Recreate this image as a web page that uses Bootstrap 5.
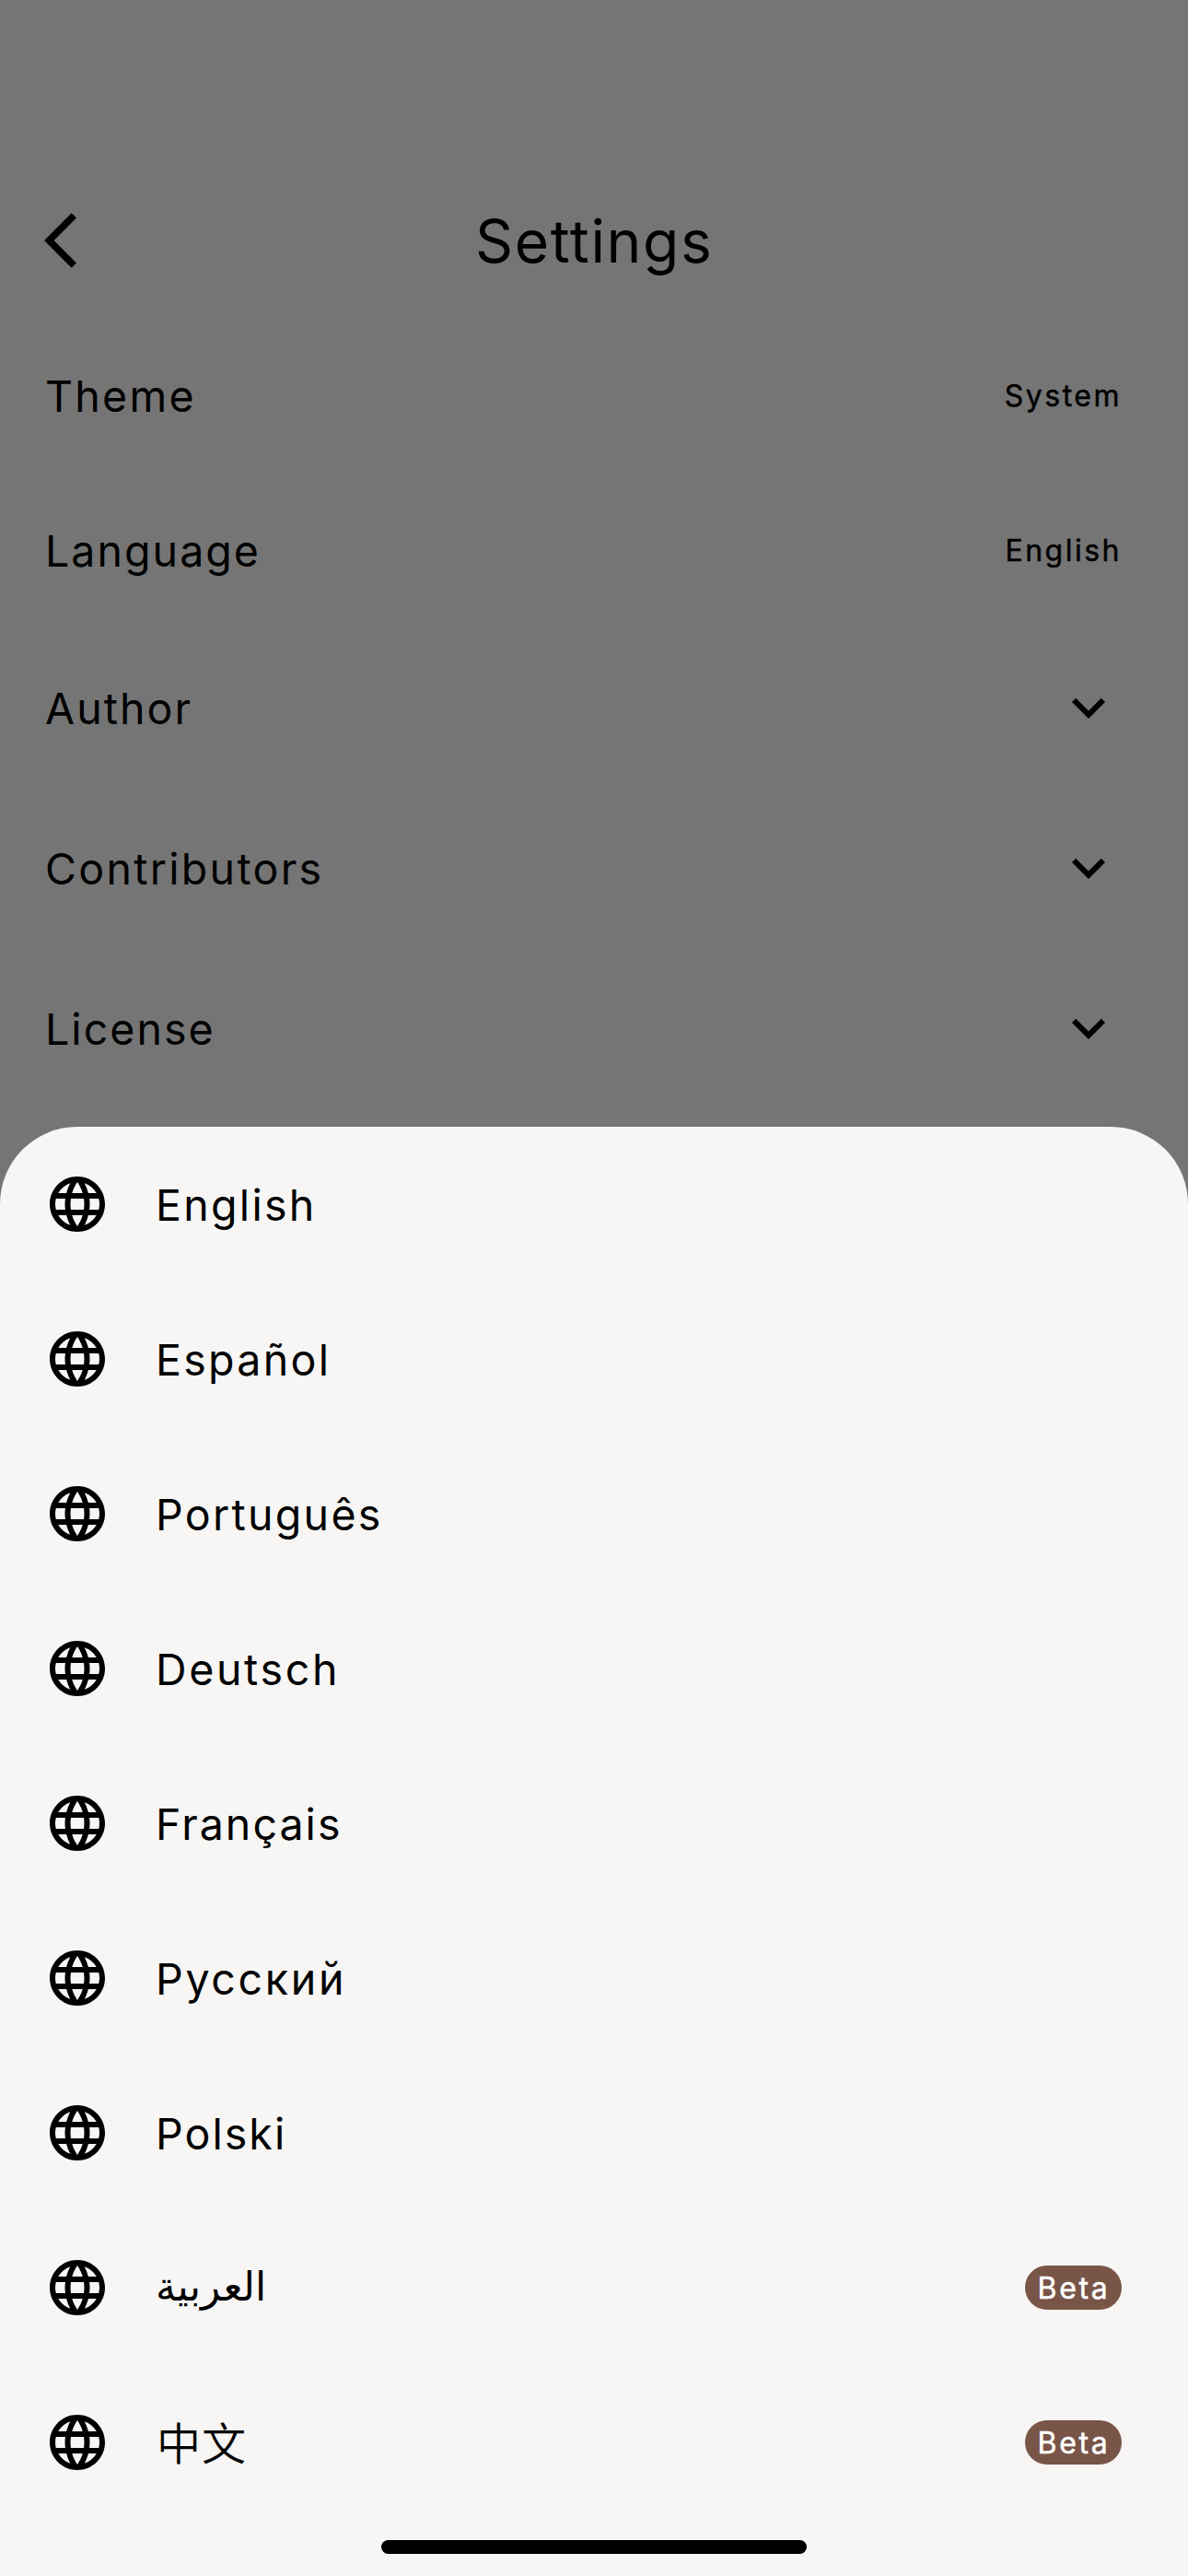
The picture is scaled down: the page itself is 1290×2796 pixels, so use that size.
<!DOCTYPE html>
<html lang="en">
<head>
<meta charset="utf-8">
<meta name="viewport" content="width=device-width, initial-scale=1">
<title>Settings</title>
<link rel="stylesheet" href="https://cdn.jsdelivr.net/npm/bootstrap@5.3.0/dist/css/bootstrap.min.css">
<style>
  body { background: #757575; color: #000; font-family: Inter, "Noto Sans CJK SC", sans-serif; font-size: 46.5px; line-height: 56px; height: 2796px; overflow: hidden; }
  .icon { width: 72px; height: 72px; fill: currentColor; display: block; flex: none; }
  .status-space { height: 177px; }
  .app-bar { height: 168px; padding: 0 48px; }
  .app-title { font-size: 64px; line-height: 78px; font-weight: 400; letter-spacing: 1.68px; margin: 2px 0 0; }
  .side { width: 468px; }
  .setting { height: 168px; padding: 0 72px 0 49px; }
  .setting.expandable { height: 174px; }
  .setting-name, .lang-name { letter-spacing: 2.3px; padding-top: 2px; white-space: nowrap; }
  .setting-name.snug { letter-spacing: 2.05px; }
  .setting-value { font-size: 32px; line-height: 40px; letter-spacing: 2.5px; padding-top: 2px; -webkit-text-stroke: .5px currentColor; }
  .sheet { height: 1573px; background: #f7f6f4; border-radius: 84px 84px 0 0; }
  .settings-list { height: 878px; overflow: hidden; }
  .lang-row { height: 168px; padding: 0 72px 0 48px; gap: 49px; }
  .lang-name:lang(de) { letter-spacing: 2.65px; }
  .lang-name:lang(ru) { letter-spacing: 2.7px; }
  .lang-name:lang(fr), .lang-name:lang(pl) { letter-spacing: 2.05px; }
  .lang-name.arabic { font: 44px/56px "DejaVu Sans", sans-serif; letter-spacing: 0; padding: 0 0 3px; }
  .lang-name.chinese { font-family: "Noto Sans CJK SC", sans-serif; font-weight: 350; font-size: 48px; letter-spacing: 1px; padding: 0 0 5px 1px; }
  .beta { width: 105px; height: 48px; background: #795548; color: #fff; font-size: 32px; line-height: 40px; letter-spacing: 2.7px; padding: 2px 0 0 1px; -webkit-text-stroke: .5px currentColor; }
  .home-bar { width: 462px; height: 15px; background: #000; margin-top: 22px; }
</style>
<script src="https://cdn.jsdelivr.net/npm/bootstrap@5.3.0/dist/js/bootstrap.bundle.min.js"></script>
</head>
<body>
<svg class="d-none">
  <symbol id="globe" viewBox="0 0 24 24"><path d="M11.99 2C6.47 2 2 6.48 2 12s4.47 10 9.99 10C17.52 22 22 17.52 22 12S17.52 2 11.99 2zm6.93 6h-2.95c-.32-1.25-.78-2.45-1.38-3.56 1.84.63 3.37 1.91 4.33 3.56zM12 4.04c.83 1.2 1.48 2.53 1.91 3.96h-3.82c.43-1.43 1.08-2.76 1.91-3.96zM4.26 14C4.1 13.36 4 12.69 4 12s.1-1.36.26-2h3.38c-.08.66-.14 1.32-.14 2s.06 1.34.14 2H4.26zm.82 2h2.95c.32 1.25.78 2.45 1.38 3.56-1.84-.63-3.37-1.9-4.33-3.56zm2.95-8H5.08c.96-1.66 2.49-2.93 4.33-3.56C8.81 5.55 8.35 6.75 8.03 8zM12 19.96c-.83-1.2-1.48-2.53-1.91-3.96h3.82c-.43 1.43-1.08 2.76-1.91 3.96zM14.34 14H9.66c-.09-.66-.16-1.32-.16-2s.07-1.35.16-2h4.68c.09.65.16 1.32.16 2s-.07 1.34-.16 2zm.25 5.56c.6-1.11 1.06-2.31 1.38-3.56h2.95c-.96 1.65-2.49 2.93-4.33 3.56zM16.36 14c.08-.66.14-1.32.14-2s-.06-1.34-.14-2h3.38c.16.64.26 1.31.26 2s-.1 1.36-.26 2h-3.38z"/></symbol>
  <symbol id="chevron" viewBox="0 0 24 24"><path d="M16.59 8.59L12 13.17 7.41 8.59 6 10l6 6 6-6z"/></symbol>
  <symbol id="back" viewBox="0 0 24 24"><path d="M11.67 3.87L9.9 2.1 0 12l9.9 9.9 1.77-1.77L3.54 12z"/></symbol>
</svg>

<div class="status-space"></div>
<header class="app-bar d-flex align-items-center">
  <div class="side"><svg class="icon"><use href="#back"/></svg></div>
  <h1 class="app-title">Settings</h1>
</header>

<main class="settings-list">
  <div class="setting d-flex align-items-center justify-content-between"><span class="setting-name">Theme</span><span class="setting-value">System</span></div>
  <div class="setting d-flex align-items-center justify-content-between"><span class="setting-name snug">Language</span><span class="setting-value">English</span></div>
  <div class="setting expandable d-flex align-items-center justify-content-between"><span class="setting-name snug">Author</span><svg class="icon"><use href="#chevron"/></svg></div>
  <div class="setting expandable d-flex align-items-center justify-content-between"><span class="setting-name">Contributors</span><svg class="icon"><use href="#chevron"/></svg></div>
  <div class="setting expandable d-flex align-items-center justify-content-between"><span class="setting-name snug">License</span><svg class="icon"><use href="#chevron"/></svg></div>
</main>

<section class="sheet">
  <div class="lang-row d-flex align-items-center"><svg class="icon"><use href="#globe"/></svg><span class="lang-name">English</span></div>
  <div class="lang-row d-flex align-items-center"><svg class="icon"><use href="#globe"/></svg><span class="lang-name" lang="es">Español</span></div>
  <div class="lang-row d-flex align-items-center"><svg class="icon"><use href="#globe"/></svg><span class="lang-name" lang="pt">Português</span></div>
  <div class="lang-row d-flex align-items-center"><svg class="icon"><use href="#globe"/></svg><span class="lang-name" lang="de">Deutsch</span></div>
  <div class="lang-row d-flex align-items-center"><svg class="icon"><use href="#globe"/></svg><span class="lang-name" lang="fr">Français</span></div>
  <div class="lang-row d-flex align-items-center"><svg class="icon"><use href="#globe"/></svg><span class="lang-name" lang="ru">Русский</span></div>
  <div class="lang-row d-flex align-items-center"><svg class="icon"><use href="#globe"/></svg><span class="lang-name" lang="pl">Polski</span></div>
  <div class="lang-row d-flex align-items-center"><svg class="icon"><use href="#globe"/></svg><span class="lang-name arabic" lang="ar">العربية</span><span class="beta rounded-pill ms-auto d-flex align-items-center justify-content-center">Beta</span></div>
  <div class="lang-row d-flex align-items-center"><svg class="icon"><use href="#globe"/></svg><span class="lang-name chinese" lang="zh">中文</span><span class="beta rounded-pill ms-auto d-flex align-items-center justify-content-center">Beta</span></div>
  <div class="home-bar rounded-pill mx-auto"></div>
</section>
</body>
</html>
